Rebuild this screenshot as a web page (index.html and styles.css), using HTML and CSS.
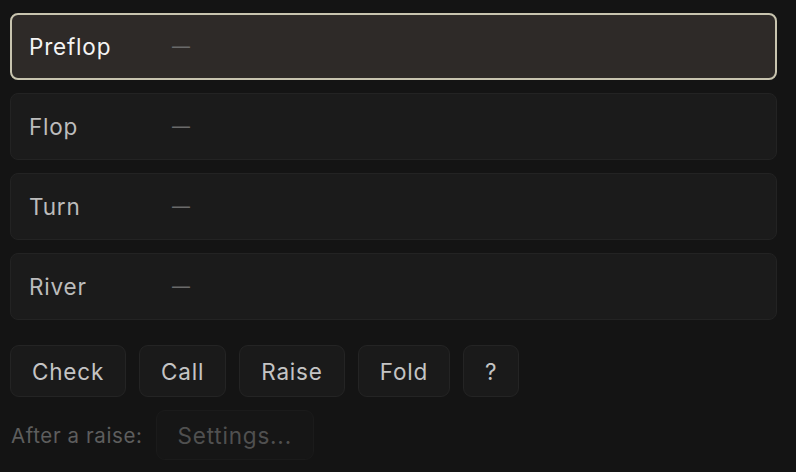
FILE: index.html
```html
<!DOCTYPE html>
<html>
<head>
<meta charset="utf-8">
<link rel="stylesheet" href="styles.css">
</head>
<body>
<div class="panel">
  <div class="streets">
    <div class="street active"><span class="label">Preflop</span><span class="value">—</span></div>
    <div class="street"><span class="label">Flop</span><span class="value">—</span></div>
    <div class="street"><span class="label">Turn</span><span class="value">—</span></div>
    <div class="street"><span class="label">River</span><span class="value">—</span></div>
  </div>
  <div class="actions">
    <button class="btn">Check</button>
    <button class="btn">Call</button>
    <button class="btn">Raise</button>
    <button class="btn">Fold</button>
    <button class="btn">?</button>
  </div>
  <div class="after">
    <span class="after-label">After a raise:</span>
    <button class="settings">Settings...</button>
  </div>
</div>
</body>
</html>
```
FILE: styles.css
```css
html, body {
  margin: 0;
  padding: 0;
  background: #141414;
  font-family: Inter, "Noto Sans", sans-serif;
}
.panel {
  padding: 13px 0 0 10px;
  width: 767px;
}
.streets {
  display: flex;
  flex-direction: column;
  gap: 13px;
}
.street {
  height: 67px;
  box-sizing: border-box;
  border: 1px solid #232323;
  border-radius: 8px;
  background: #1b1b1b;
  display: flex;
  align-items: center;
  padding-left: 18px;
  padding-bottom: 1px;
  font-size: 22.5px;
  letter-spacing: 0.8px;
  color: #bcbcbc;
}
.street.active {
  background: #2e2a28;
  border: 2px solid #c8c4af;
  padding-left: 17px;
  color: #f4f4f4;
}
.label {
  width: 143px;
}
.value {
  color: #6a6a6a;
  font-size: 18px;
  letter-spacing: 0;
}
.actions {
  display: flex;
  gap: 13px;
  margin-top: 25px;
}
.btn {
  height: 52px;
  box-sizing: border-box;
  padding: 0 21px;
  border: 1px solid #242424;
  border-radius: 9px;
  background: #1a1a1a;
  color: #c4c4c4;
  font-family: Inter, "Noto Sans", sans-serif;
  font-size: 22.5px;
  letter-spacing: 0.8px;
}
.after {
  display: flex;
  align-items: center;
  gap: 13px;
  margin-top: 13px;
}
.after-label {
  font-size: 20.5px;
  letter-spacing: 0.6px;
  color: #5e5e5e;
  padding-left: 1px;
}
.settings {
  height: 50px;
  box-sizing: border-box;
  padding: 0 21px;
  border: 1px solid #1b1b1b;
  border-radius: 9px;
  background: #161616;
  color: #505050;
  font-family: Inter, "Noto Sans", sans-serif;
  font-size: 22.5px;
  letter-spacing: 0.8px;
}
```
